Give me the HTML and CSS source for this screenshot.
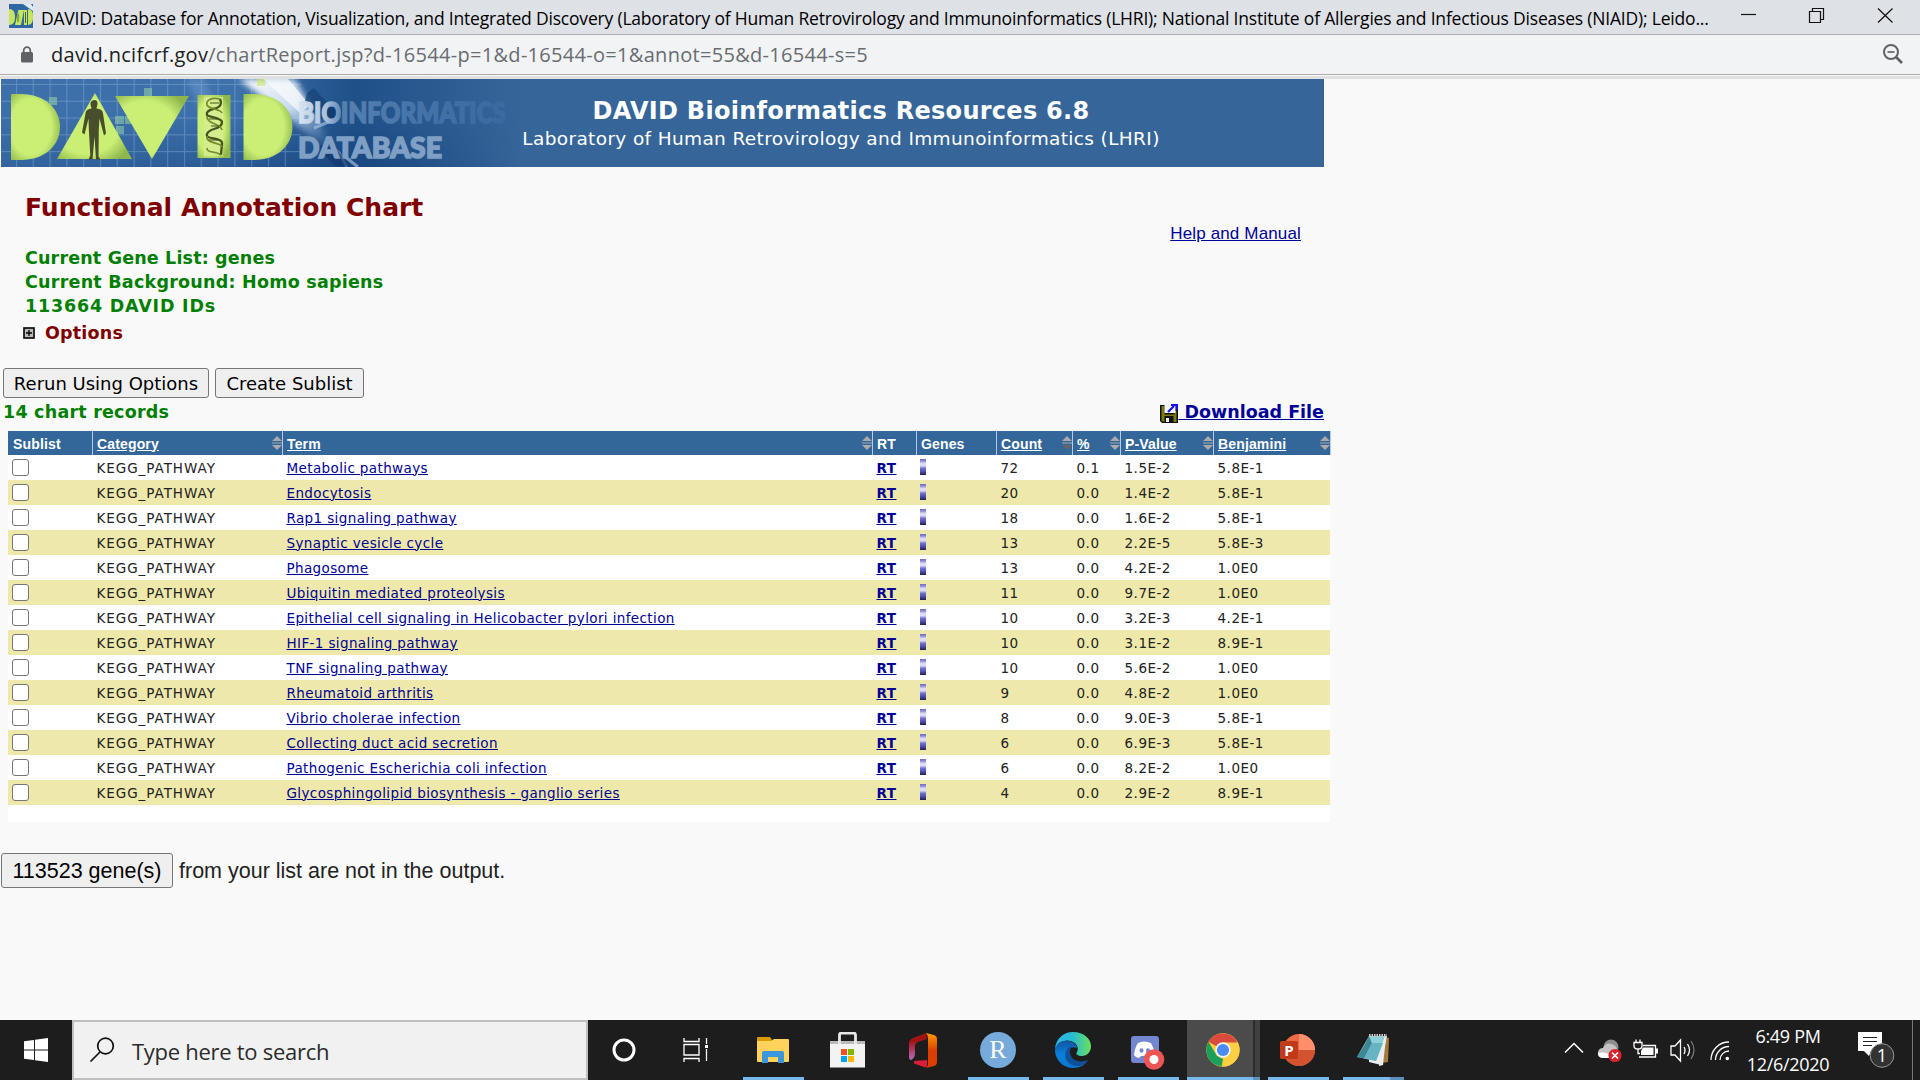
FILE: index.html
```html
<!DOCTYPE html>
<html lang="en">
<head>
<meta charset="utf-8">
<title>DAVID: Functional Annotation Chart</title>
<link rel="stylesheet" href="styles.css">
</head>
<body>
<header class="titlebar">
  <svg class="favicon" width="24" height="24" viewBox="0 0 24 24"><rect width="24" height="24" fill="#2f66a3"/><path d="M14 0h8l2 3v4z" fill="#dcebf6"/><path d="M0 5c5 0 6 4 6 8s-1 8-6 8zM6 21l3-14 3 14zM9 6h6l-3 15zM15 6h3v15h-3zM19 5c5 1 5 4 5 8s-1 8-5 8z" fill="#c5e65c"/><path d="M9 10v8M16.500 8v11" stroke="#4c6b25" fill="none"/></svg>
  <span class="window-title">DAVID: Database for Annotation, Visualization, and Integrated Discovery (Laboratory of Human Retrovirology and Immunoinformatics (LHRI); National Institute of Allergies and Infectious Diseases (NIAID); Leido...</span>
  <svg class="win-controls" width="170" height="34" viewBox="0 0 170 34" fill="none" stroke="#111" stroke-width="1.200"><path d="M1 14.500h15"/><path d="M69.500 11.500h11v11h-11zM72.500 11.500v-3h11v11h-3"/><path d="M138 8.500l14.500 14M152.500 8.500l-14.500 14"/></svg>
</header>
<div class="addressbar">
  <svg class="lock" width="14" height="18" viewBox="0 0 14 18"><rect x="1" y="6" width="12" height="10.500" rx="1.500" fill="#5f6368"/><path d="M3.700 7V4.500a3.300 3.300 0 0 1 6.600 0V7" fill="none" stroke="#5f6368" stroke-width="1.700"/></svg>
  <span class="url"><span class="host">david.ncifcrf.gov</span>/chartReport.jsp?d-16544-p=1&amp;d-16544-o=1&amp;annot=55&amp;d-16544-s=5</span>
  <svg class="zoom-icon" width="22" height="22" viewBox="0 0 22 22" fill="none" stroke="#5f6368" stroke-width="2"><circle cx="9" cy="9" r="7"/><path d="M14 14l6 6" stroke-width="2.600"/><path d="M5.500 9h7" stroke-width="1.700"/></svg>
</div>
<main class="page">
  <section class="banner">
    <svg class="logo" width="520" height="88" viewBox="0 0 520 88">
      <defs>
        <linearGradient id="sky" x1="0" x2="1"><stop offset="0" stop-color="#3d70aa"/><stop offset=".45" stop-color="#3d71ac"/><stop offset=".68" stop-color="#1f5088"/><stop offset="1" stop-color="#366699"/></linearGradient>
        <linearGradient id="shade" x1="0" x2="0" y1="0" y2="1"><stop offset=".4" stop-color="#133f78" stop-opacity="0"/><stop offset="1" stop-color="#133f78" stop-opacity=".55"/></linearGradient>
        <linearGradient id="fadeShade" x1="0" x2="1"><stop offset="0" stop-color="#fff" stop-opacity=".4"/><stop offset=".65" stop-color="#fff"/><stop offset="1" stop-color="#fff" stop-opacity="0"/></linearGradient>
        <mask id="shadeMask"><rect width="520" height="88" fill="url(#fadeShade)"/></mask>
        <radialGradient id="lime" cx=".4" cy=".5" r=".65"><stop offset=".65" stop-color="#cbee75"/><stop offset="1" stop-color="#8db64c"/></radialGradient>
        <linearGradient id="beam" gradientUnits="userSpaceOnUse" x1="245" y1="0" x2="320" y2="75"><stop offset="0" stop-color="#fff"/><stop offset=".5" stop-color="#cfe0f2" stop-opacity=".95"/><stop offset="1" stop-color="#8fb2d8" stop-opacity="0"/></linearGradient>
        <linearGradient id="word" gradientUnits="userSpaceOnUse" x1="296" x2="505" y1="0" y2="0"><stop offset="0" stop-color="#dbe6f2"/><stop offset=".14" stop-color="#a9c0db"/><stop offset=".22" stop-color="#5580b0"/><stop offset=".6" stop-color="#4473a8"/><stop offset="1" stop-color="#3a699f"/></linearGradient>
        <pattern id="grid" width="16.800" height="16.800" x="10" y="0" patternUnits="userSpaceOnUse"><path d="M0 5.500h17M5.500 0v17" stroke="#9dbfe3" stroke-opacity=".38" fill="none"/></pattern>
        <filter id="soft" x="-20%" y="-20%" width="140%" height="140%"><feGaussianBlur stdDeviation="3"/></filter>
        <filter id="edge"><feGaussianBlur stdDeviation=".6"/></filter>
      </defs>
      <rect width="520" height="88" fill="url(#sky)"/>
      <rect width="520" height="88" fill="url(#shade)" mask="url(#shadeMask)"/>
      <rect width="300" height="88" fill="url(#grid)"/>
      <path d="M185 0h18l14 30-10 15z" fill="#86aedb" opacity=".35" filter="url(#soft)"/>
      <path d="M238 0h56l40 72-20-12z" fill="url(#beam)" filter="url(#soft)"/>
      <path d="M262 0h25l22 26-10 8z" fill="#fff" opacity=".65" filter="url(#edge)"/>
      <path d="M306 14l7-5 8 9 18 18-4 7-18-4-13-17z" fill="#174277" opacity=".7" filter="url(#edge)"/>
      <circle cx="332" cy="33" r="9" fill="#123d72"/>
      <path d="M313 49l24-10M324 62l14 12 8 14M342 76l15 12" stroke="#a9c4e1" stroke-width="3" opacity=".65" fill="none" filter="url(#edge)"/>
      <path d="M316 68l18 19 16 1-20-25z" fill="#12386d" opacity=".7"/>
      <g fill="#8fc9a6" opacity=".6"><path d="M48 18h8v8h-8zM143 9h8v8h-8zM114 37h9v8h-9zM115 47h8v8h-8zM124 37h6v8h-6z"/><path d="M256 0h8v7h-8z" fill="#cdea65"/></g>
      <g fill="url(#lime)" filter="url(#edge)">
        <path d="M10 15h10c24 0 39 15 39 33S44 81 20 81H10z"/>
        <path d="M94 14l37 66H56z"/>
        <path d="M114 17h74l-37 63z"/>
        <path d="M196.500 16h33v63h-33z"/>
        <path d="M242.500 15h10c24 0 39 15 39 33s-15 33-39 33h-10z"/>
      </g>
      <path d="M203 18h19v59h-19z" fill="#d6ec98" opacity=".75"/>
      <g fill="none" stroke="#45531c" stroke-width="2.300"><path d="M219 20c3 7-2 9-7 10s-7 4-6 6 15 3 15 7-4 6-8 7-8 4-7 7 15 2 15 7-1 8-1 12"/><path d="M219 20c-10-2-14 2-13 6s14 4 15 8M206 37c-1 8 14 7 15 14M206 57c-2 8 14 6 15 11M206 69c0 6 8 2 14 7" stroke="#768b2b" stroke-width="1.700"/><path d="M209 24h9M208 40h9M210 47h8M208 61h9" stroke-width="1"/></g>
      <path d="M93.500 21c2 0 3 1.500 3 3.500 0 2.500-1 3.500-1 5 4 .5 6 1.500 6.500 5l3 20-2 2-4.500-17-.7 10-.3 28 2 3h-4.500l-1.500-23-2 23h-4l1.800-4-1.500-27-.3-10-4 16-2.500-2 3.500-19c.5-3.500 2.500-4.500 6-5 0-1.500-1-2.500-1-5 0-2 2-3.500 4-3.500z" fill="#484d2b"/>
      <g class="logo-word"><text x="297" y="44" textLength="208" lengthAdjust="spacingAndGlyphs" fill="url(#word)" stroke="url(#word)">BIOINFORMATICS</text><text x="297" y="78.500" textLength="144" lengthAdjust="spacingAndGlyphs" fill="#7f9fc4" stroke="#7f9fc4">DATABASE</text></g>
    </svg>
    <div class="banner-text">
      <div class="banner-title">DAVID Bioinformatics Resources 6.8</div>
      <div class="banner-sub">Laboratory of Human Retrovirology and Immunoinformatics (LHRI)</div>
    </div>
  </section>
  <section class="summary">
    <div class="summary-text">
      <h1>Functional Annotation Chart</h1>
      <p class="gene-list">Current Gene List: genes</p>
      <p class="background">Current Background: Homo sapiens</p>
      <p class="ids">113664 DAVID IDs</p>
      <div class="options"><svg width="12" height="12" viewBox="0 0 12 12"><rect x="1" y="1" width="10" height="10" fill="#bbb" stroke="#000" stroke-width="1.600"/><path d="M3 6h6M6 3v6" stroke="#000" stroke-width="1.300"/></svg>Options</div>
    </div>
    <a class="help">Help and Manual</a>
  </section>
  <div class="actions"><button>Rerun Using Options</button><button>Create Sublist</button></div>
  <div class="records"><span>14 chart records</span>
    <a class="download"><svg width="18" height="19" viewBox="0 0 18 19"><path d="M0 1h18v18H2l-2-2z" fill="#111"/><path d="M1.500 2h3v8.500h10V7h2v11h-3v-6h-9v6l-3-1z" fill="#7d7a10"/><path d="M4.500 1h11v8h-11z" fill="#f4f4f4"/><path d="M8 8l6-6M11 1h6v5" stroke="#11f" stroke-width="2.200" fill="none"/><path d="M6 14h3v4H6z" fill="#eee"/></svg><span>&nbsp;Download File</span></a>
  </div>
  <table class="chart">
    <colgroup><col class="c1"><col class="c2"><col class="c3"><col class="c4"><col class="c5"><col class="c6"><col class="c7"><col class="c8"><col class="c9"></colgroup>
    <thead><tr><th>Sublist</th><th class="sort"><a>Category</a></th><th class="sort"><a>Term</a></th><th>RT</th><th>Genes</th><th class="sort down"><a>Count</a></th><th class="sort"><a>%</a></th><th class="sort"><a>P-Value</a></th><th class="sort"><a>Benjamini</a></th></tr></thead>
    <tbody>
      <tr><td><input type="checkbox"></td><td>KEGG_PATHWAY</td><td><a>Metabolic pathways</a></td><td><a>RT</a></td><td><i class="bar"></i></td><td>72</td><td>0.1</td><td>1.5E-2</td><td>5.8E-1</td></tr>
      <tr><td><input type="checkbox"></td><td>KEGG_PATHWAY</td><td><a>Endocytosis</a></td><td><a>RT</a></td><td><i class="bar"></i></td><td>20</td><td>0.0</td><td>1.4E-2</td><td>5.8E-1</td></tr>
      <tr><td><input type="checkbox"></td><td>KEGG_PATHWAY</td><td><a>Rap1 signaling pathway</a></td><td><a>RT</a></td><td><i class="bar"></i></td><td>18</td><td>0.0</td><td>1.6E-2</td><td>5.8E-1</td></tr>
      <tr><td><input type="checkbox"></td><td>KEGG_PATHWAY</td><td><a>Synaptic vesicle cycle</a></td><td><a>RT</a></td><td><i class="bar"></i></td><td>13</td><td>0.0</td><td>2.2E-5</td><td>5.8E-3</td></tr>
      <tr><td><input type="checkbox"></td><td>KEGG_PATHWAY</td><td><a>Phagosome</a></td><td><a>RT</a></td><td><i class="bar"></i></td><td>13</td><td>0.0</td><td>4.2E-2</td><td>1.0E0</td></tr>
      <tr><td><input type="checkbox"></td><td>KEGG_PATHWAY</td><td><a>Ubiquitin mediated proteolysis</a></td><td><a>RT</a></td><td><i class="bar"></i></td><td>11</td><td>0.0</td><td>9.7E-2</td><td>1.0E0</td></tr>
      <tr><td><input type="checkbox"></td><td>KEGG_PATHWAY</td><td><a>Epithelial cell signaling in Helicobacter pylori infection</a></td><td><a>RT</a></td><td><i class="bar"></i></td><td>10</td><td>0.0</td><td>3.2E-3</td><td>4.2E-1</td></tr>
      <tr><td><input type="checkbox"></td><td>KEGG_PATHWAY</td><td><a>HIF-1 signaling pathway</a></td><td><a>RT</a></td><td><i class="bar"></i></td><td>10</td><td>0.0</td><td>3.1E-2</td><td>8.9E-1</td></tr>
      <tr><td><input type="checkbox"></td><td>KEGG_PATHWAY</td><td><a>TNF signaling pathway</a></td><td><a>RT</a></td><td><i class="bar"></i></td><td>10</td><td>0.0</td><td>5.6E-2</td><td>1.0E0</td></tr>
      <tr><td><input type="checkbox"></td><td>KEGG_PATHWAY</td><td><a>Rheumatoid arthritis</a></td><td><a>RT</a></td><td><i class="bar"></i></td><td>9</td><td>0.0</td><td>4.8E-2</td><td>1.0E0</td></tr>
      <tr><td><input type="checkbox"></td><td>KEGG_PATHWAY</td><td><a>Vibrio cholerae infection</a></td><td><a>RT</a></td><td><i class="bar"></i></td><td>8</td><td>0.0</td><td>9.0E-3</td><td>5.8E-1</td></tr>
      <tr><td><input type="checkbox"></td><td>KEGG_PATHWAY</td><td><a>Collecting duct acid secretion</a></td><td><a>RT</a></td><td><i class="bar"></i></td><td>6</td><td>0.0</td><td>6.9E-3</td><td>5.8E-1</td></tr>
      <tr><td><input type="checkbox"></td><td>KEGG_PATHWAY</td><td><a>Pathogenic Escherichia coli infection</a></td><td><a>RT</a></td><td><i class="bar"></i></td><td>6</td><td>0.0</td><td>8.2E-2</td><td>1.0E0</td></tr>
      <tr><td><input type="checkbox"></td><td>KEGG_PATHWAY</td><td><a>Glycosphingolipid biosynthesis - ganglio series</a></td><td><a>RT</a></td><td><i class="bar"></i></td><td>4</td><td>0.0</td><td>2.9E-2</td><td>8.9E-1</td></tr>
    </tbody>
  </table>
  <div class="missing"><button>113523 gene(s)</button><span>from your list are not in the output.</span></div>
</main>
<footer class="taskbar">
  <div class="start"><svg width="24" height="24" viewBox="0 0 24 24" fill="#fff"><path d="M0 3.300l10-1.400v9.600H0zM11 1.700L24 0v11.500H11zM0 12.500h10v9.600L0 20.700zM11 12.500h13V24l-13-1.700z"/></svg></div>
  <div class="search"><svg width="26" height="26" viewBox="0 0 26 26" fill="none" stroke="#111" stroke-width="1.700"><circle cx="16.500" cy="9" r="7.800"/><path d="M11 15L1.500 24.500"/></svg><span>Type here to search</span></div>
  <div class="slot first"><svg width="26" height="26" viewBox="0 0 26 26"><circle cx="13" cy="13" r="10" fill="none" stroke="#fff" stroke-width="3"/></svg></div>
  <div class="slot tasks"><svg width="26" height="24" viewBox="0 0 26 24" fill="none" stroke="#fff" stroke-width="1.300"><path d="M1 0v3.500h15V0M1 6.500h15v10.500H1zM1 24v-3.500h15V24M23.500 0v6M23.500 11v12"/><path d="M22 7h3v3h-3z" fill="#fff" stroke="none"/></svg></div>
  <div class="slot open"><svg width="32" height="28" viewBox="0 0 32 28"><path d="M0 2q0-1 1-1h12l2 3v4H0z" fill="#dc9900"/><path d="M0 5h14l3-2h14q1 0 1 1v21q0 1-1 1H1q-1 0-1-1z" fill="#ffd25c"/><path d="M5 27V17q0-2 2-2h18q2 0 2 2v10h-6v-6H11v6z" fill="#3a96dd"/></svg></div>
  <div class="slot"><svg width="36" height="36" viewBox="0 0 36 36"><path d="M0 9h35v26.500H0z" fill="#f3f3f3"/><path d="M0 9h35v3H0z" fill="#bbb"/><path d="M9.500 12V3q0-2 2-2h12q2 0 2 2v9" fill="none" stroke="#e8e8e8" stroke-width="2.800"/><path d="M11 17h6v6h-6z" fill="#f25022"/><path d="M18 17h6v6h-6z" fill="#7fba00"/><path d="M11 24h6v6h-6z" fill="#00a4ef"/><path d="M18 24h6v6h-6z" fill="#ffb900"/></svg></div>
  <div class="slot"><svg width="28" height="35" viewBox="0 0 28 35"><defs><linearGradient id="o1" x2="0" y2="1"><stop offset=".3" stop-color="#a31313"/><stop offset="1" stop-color="#b76bc0"/></linearGradient><linearGradient id="o2" x2="0" y2="1"><stop stop-color="#ff9c00"/><stop offset=".5" stop-color="#dc3e00"/></linearGradient></defs><path d="M17 0L4 5Q0 7 0 10v14q0 4 3 2.500 3-2 3-5V13q0-3 3-4l9-3z" fill="url(#o1)"/><path d="M17 0l8 2q3 1 3 4v23q0 3-3 4l-8 2q2-2 2-4V5q0-3-2-5z" fill="url(#o2)"/><path d="M5 28l13-1v5q0 3-3 2L5 30.500z" fill="#dc1c3c"/></svg></div>
  <div class="slot open"><svg width="36" height="36" viewBox="0 0 36 36"><circle cx="18" cy="18" r="18" fill="#75aadb"/><text class="r-letter" x="18" y="25.500" text-anchor="middle" fill="#fff">R</text></svg></div>
  <div class="slot open"><svg width="36" height="36" viewBox="0 0 36 36"><defs><linearGradient id="e1" x2="1"><stop stop-color="#2db5ee"/><stop offset=".5" stop-color="#27bcd0"/><stop offset="1" stop-color="#6de05a"/></linearGradient><linearGradient id="e2" x2="0" y2="1"><stop stop-color="#1055a4"/><stop offset=".5" stop-color="#0a80d8"/><stop offset="1" stop-color="#0c74cd"/></linearGradient></defs><path d="M0 17C1 6 9 0 18 0c11 0 18 7 18 14 0 6-4 10-9 10-4 0-7-2-5-4 2-4 0-9-6-11C9 7 3 11 0 17z" fill="url(#e1)"/><path d="M0 18C1 11 7 8 13 9c5 0 9 4 9 7-8-3-10 4-7 9 3 6 11 8 18 3-3 5-8 8-15 8C8 36 0 28 0 18z" fill="url(#e2)"/><path d="M17 14c-8 2-9 12-3 17 5 4 14 5 19-3-7 3-15 1-17-4-2-4-1-7 1-10z" fill="#10509a"/></svg></div>
  <div class="slot open"><svg class="disc" width="36" height="36" viewBox="0 0 36 36"><rect x="1" y="1" width="28" height="27" rx="3" fill="#7386d0"/><path d="M8 8q6-3 13 0 3 5 4 12-3 3-5 3l-2-2h-7l-2 2q-3 0-5-3 1-8 4-12z" fill="#fff"/><ellipse cx="11.500" cy="15.500" rx="2" ry="2.300" fill="#7386d0"/><ellipse cx="18" cy="15.500" rx="2" ry="2.300" fill="#7386d0"/><circle cx="24" cy="24.500" r="10.300" fill="#ed5555"/><circle cx="24" cy="24.500" r="4.500" fill="#fff"/></svg></div>
  <div class="slot active"><svg width="34" height="34" viewBox="0 0 34 34"><circle cx="17" cy="17" r="16.700" fill="#fc3"/><path d="M17 17L2.500 8.700A16.700 16.700 0 0 1 31.500 9z" fill="#da4a3d"/><path d="M2.500 8.700L11 23l6 3-1.500 7.600A16.700 16.700 0 0 1 2.500 8.700z" fill="#1aa05a"/><path d="M17 9.500h14.700a16.700 16.700 0 0 1-15 24.200L24 20z" fill="#fdd043"/><circle cx="17" cy="17" r="7.700" fill="#f4f4f4"/><circle cx="17" cy="17" r="6.100" fill="#4b8bf5"/></svg></div>
  <div class="slot open"><svg width="36" height="34" viewBox="0 0 36 34"><circle cx="19" cy="17" r="16" fill="#ed6c47"/><path d="M19 1a16 16 0 0 1 16 16H19z" fill="#ff8f6b"/><path d="M3 17h32a16 16 0 0 1-32 0z" fill="#d35230"/><rect y="8" width="18" height="18" rx="1.500" fill="#c13b1b"/><text class="p-letter" x="9" y="22.500" text-anchor="middle" fill="#fff">P</text></svg></div>
  <div class="slot open stacked"><svg width="34" height="34" viewBox="0 0 34 34"><path d="M28 4l5 1-1 24-6 1z" fill="#a57b3b"/><path d="M13 3h18l-6 29-12-3z" fill="#e9eff0"/><path d="M30 4l-3 28-4 1 4-28z" fill="#e9eff0"/><path d="M13 3h16l-9 25L1 24z" fill="#8ed0da"/><path d="M13 3l-5 10L1 24l7 1.500 8-15z" fill="#3e8795"/><path d="M16 10l11 0-7 18-12-2.500z" fill="#67b4c2"/><path d="M13 2.500h18" stroke="#ccc" stroke-width="3" stroke-dasharray="1.500 1"/></svg></div>
  <div class="tray">
    <svg width="150" height="36" viewBox="0 0 150 36" fill="none" stroke="#fff" stroke-width="1.300">
      <path d="M1 20.500L10 11.500l9 9" stroke-width="1.500"/>
      <g stroke="none"><circle cx="47" cy="15" r="7.500" fill="#8d8d8d"/><path d="M38 26q-5-1-4-6 1-4 5-4 3-6 9-4 5 2 5 6 4 3 2 8z" fill="#c4c4c4"/><path d="M34 21q8-2 17 5H38q-4-1-4-5z" fill="#fff"/><circle cx="51" cy="23.500" r="6.600" fill="#d8232b"/></g><path d="M48 20.500l6 6M54 20.500l-6 6" stroke-width="1.600"/>
      <path d="M79 13.500h12.500v11.500H75M72 10.500v-3M76 10.500v-3M70 10.500h8v3.500q0 3-4 3t-4-3zM74 17v4.500h2"/><path d="M79 15.500h10.500v7.500H77v-4z" fill="#fff" stroke="none"/><path d="M93 16.500v5" stroke-width="2"/>
      <path d="M107 14h4l5.500-6v21l-5.500-6h-4zM120 15q2 3 0 7M123.500 12q4 6 0 12"/><path d="M127 9q6 9 0 18" stroke="#777"/>
    </svg>
    <svg class="wifi" width="20" height="20" viewBox="0 0 20 20" fill="none" stroke="#fff" stroke-width="1.300"><path d="M1 19A18 18 0 0 1 19 1M5.500 19A13.500 13.500 0 0 1 19 5.500M10 19a9 9 0 0 1 9-9" /><circle cx="17.300" cy="17.500" r="1.800" fill="#fff" stroke="none"/></svg>
    <div class="clock"><span>6:49 PM</span><span>12/6/2020</span></div>
    <svg class="notes" width="38" height="38" viewBox="0 0 38 38"><path d="M0 1h24v19H13l-2 5-5-5H0z" fill="#fff"/><path d="M5 6.500h14M5 10.500h14M5 14.500h9" stroke="#222" stroke-width="1.200"/><circle cx="24" cy="24.500" r="11.800" fill="#333" stroke="#999"/><text class="badge" x="24" y="31" text-anchor="middle" fill="#fff">1</text></svg>
  </div>
  <div class="peek"></div>
</footer>
</body>
</html>
```
FILE: styles.css
```css
* { box-sizing: border-box; }
body { margin: 0; width: 1920px; height: 1080px; overflow: hidden; display: flex; flex-direction: column; background: #f9f9f9; color: #222; font-family: "DejaVu Sans", sans-serif; }
svg { display: block; flex: none; }
h1, p { margin: 0; }
button { font: inherit; color: #000; border: 1px solid #767676; border-radius: 3px; background: #efefef; padding: 0; white-space: nowrap; }

.titlebar { height: 35px; display: flex; align-items: center; padding-left: 9px; background: #dee1e6; border-bottom: 1px solid #adb0b3; font-family: "Open Sans", sans-serif; font-size: 17.5px; letter-spacing: -0.195px; color: #000; }
.favicon { margin: -3px 8px 0 0; }
.window-title { white-space: nowrap; width: 1699px; padding-top: 1px; }
.win-controls { height: 34px; }
.addressbar { height: 44px; display: flex; align-items: center; padding: 0 16px 2px 20px; background: #f1f3f4; border-bottom: 3px solid #e0e0e0; box-shadow: inset 0 -1px #f8f8f8, inset 0 -2px #acacac; font-family: "Open Sans", sans-serif; font-size: 20px; letter-spacing: 0.3px; color: #696c70; }
.url { margin-left: 17px; flex: 1; white-space: nowrap; }
.host { color: #202124; }
.zoom-icon { margin-top: -2px; }

.page { height: 941px; }
.banner { width: 1323px; height: 88px; margin-left: 1px; background: #366699; display: grid; color: #fff; }
.logo { grid-area: 1 / 1; }
.logo-word { font: 900 29px "Lato", sans-serif; stroke-width: 1.6px; }
.banner-text { grid-area: 1 / 1; width: 640px; margin-left: 520px; padding-top: 16px; text-align: center; white-space: nowrap; }
.banner-title { font-weight: bold; font-size: 24px; line-height: 32px; letter-spacing: 0.27px; }
.banner-sub { font-size: 18.5px; line-height: 24px; letter-spacing: 0.36px; }
.summary { width: 1301px; height: 201px; display: flex; justify-content: space-between; padding: 25px 0 0 25px; }
.summary h1 { font-size: 25px; line-height: 32px; color: #800000; margin-bottom: 22px; }
.summary p { font-weight: bold; font-size: 17.5px; line-height: 24px; color: #008000; white-space: nowrap; }
.gene-list { letter-spacing: 0.16px; }
.background { letter-spacing: 0.24px; }
.summary .ids { letter-spacing: 0.8px; }
.options { display: flex; align-items: center; gap: 10px; margin-left: -2px; padding-top: 3px; font-weight: bold; font-size: 17.5px; line-height: 24px; letter-spacing: 0.2px; color: #800000; }
.help { margin-top: 30px; font: 17px/24px "Liberation Sans", sans-serif; letter-spacing: 0.15px; color: #009; text-decoration: underline; }
.actions { display: flex; gap: 6px; padding-left: 3px; height: 31px; font-size: 18px; }
.actions button { width: 206px; height: 30px; }
.actions button + button { width: 149px; }
.records { width: 1324px; height: 32px; padding: 1px 0 0 3px; display: flex; justify-content: space-between; font-weight: bold; font-size: 17.5px; line-height: 24px; color: #008000; }
.records > span { letter-spacing: 0.22px; }
.download { display: flex; color: #009; text-decoration: underline; }
.download svg { margin-top: 4px; }

.chart { margin-left: 8px; width: 1322px; border-collapse: collapse; table-layout: fixed; font-size: 13.5px; background: #fff; }
.chart::after { content: ""; display: block; height: 17px; }
.c1 { width: 84px; } .c2 { width: 190px; } .c3 { width: 590px; } .c4 { width: 44px; } .c5 { width: 80px; } .c6 { width: 76px; } .c7 { width: 48px; } .c8 { width: 93px; } .c9 { width: 117px; }
.chart th { height: 24px; padding: 1px 0 0 5px; text-align: left; font: bold 14px/22px "Liberation Sans", sans-serif; letter-spacing: 0.15px; color: #fff; background: #336699; }
.chart th + th { box-shadow: inset 1px 0 #b9c8ef; }
.chart th:last-child { box-shadow: inset 1px 0 #b9c8ef, 1px 0 #b9c8ef; }
.chart th a { text-decoration: underline; }
.chart th.sort { background: #336699 url("data:image/svg+xml,%3Csvg xmlns='http://www.w3.org/2000/svg' width='10' height='14'%3E%3Cpath d='M5 0l5 5H0zM5 14l5-5H0zM0 6.500h10v1H0z' fill='%23aaa'/%3E%3C/svg%3E") right 0 center no-repeat; }
.chart th.down { background-image: url("data:image/svg+xml,%3Csvg xmlns='http://www.w3.org/2000/svg' width='10' height='14'%3E%3Cpath d='M5 0l5 5H0zM0 6.500h10v1H0z' fill='%23aaa'/%3E%3Cpath d='M5 14l5-5H0z' fill='%23666'/%3E%3C/svg%3E"); }
.chart td { height: 25px; padding: 0 0 0 4.5px; line-height: 20px; white-space: nowrap; letter-spacing: 0.5px; }
.chart td:first-child { padding-left: 4px; }
.chart td:nth-child(2) { letter-spacing: 0.95px; }
.chart td:nth-child(3) { letter-spacing: 0.38px; }
.chart td:nth-child(5) { padding-left: 4px; }
.chart tr:nth-child(even) td { background: #eee8aa; }
.chart td a { color: #009; text-decoration: underline; }
.chart td:nth-child(4) { font-weight: bold; }
.chart input { appearance: none; display: block; width: 17px; height: 17px; margin: 0; border: 1px solid #767676; border-radius: 3px; background: #fff; }
.bar { display: block; width: 6px; height: 16px; margin-top: -1px; background: linear-gradient(#6c6cc4 0, #8a8ad8 12%, #dcdcf6 28%, #dcdcf6 42%, #7070d0 58%, #5555b8 75%, #202050 100%); }
.missing { display: flex; align-items: center; gap: 6px; margin-top: 31px; padding-left: 1px; font: 21.5px/24px "Liberation Sans", sans-serif; }
.missing button { width: 172px; height: 35px; }

.taskbar { height: 60px; display: flex; background: #1d1d1d; color: #fff; font-family: "Open Sans", sans-serif; }
.start { width: 72px; display: flex; align-items: center; justify-content: center; }
.search { width: 516px; display: flex; align-items: center; border: 2px solid #c0c0c0; background: #f1f1f1; color: #2b2b2b; font-size: 22px; letter-spacing: -0.28px; padding-left: 15px; gap: 17px; }
.search span { padding-top: 2px; }
.slot { position: relative; width: 75px; display: flex; align-items: center; justify-content: center; }
.slot.first { width: 72px; }
.tasks { padding-right: 3px; }
.open::after, .active::after { content: ""; position: absolute; bottom: 0; left: 8px; width: 61px; height: 3px; background: #76b9ed; }
.active { background: linear-gradient(90deg, transparent 2px, #4b4b4b 2px 68px, #2c2c2c 68px 70px, #404040 70px 75px); }
.active::after { left: 2px; width: 73px; background: linear-gradient(90deg, #76b9ed 66px, #5c93bf 66px); }
.stacked::after { background: linear-gradient(90deg, #76b9ed 47px, #5c8fb8 47px); }
.disc { margin-top: 5px; }
.r-letter { font: 26px "Liberation Serif", serif; }
.p-letter { font: bold 15px "Open Sans", sans-serif; }
.badge { font: 18px "Open Sans", sans-serif; }
.tray { display: flex; align-items: center; width: 502px; padding-left: 154px; }
.wifi { margin: 2px 0 0 -4px; }
.clock { width: 84px; margin-left: 16px; display: flex; flex-direction: column; align-items: center; font-size: 18px; line-height: 28px; letter-spacing: -0.3px; white-space: nowrap; }
.notes { margin-left: 28px; }
.peek { width: 1px; background: #777; }
```
